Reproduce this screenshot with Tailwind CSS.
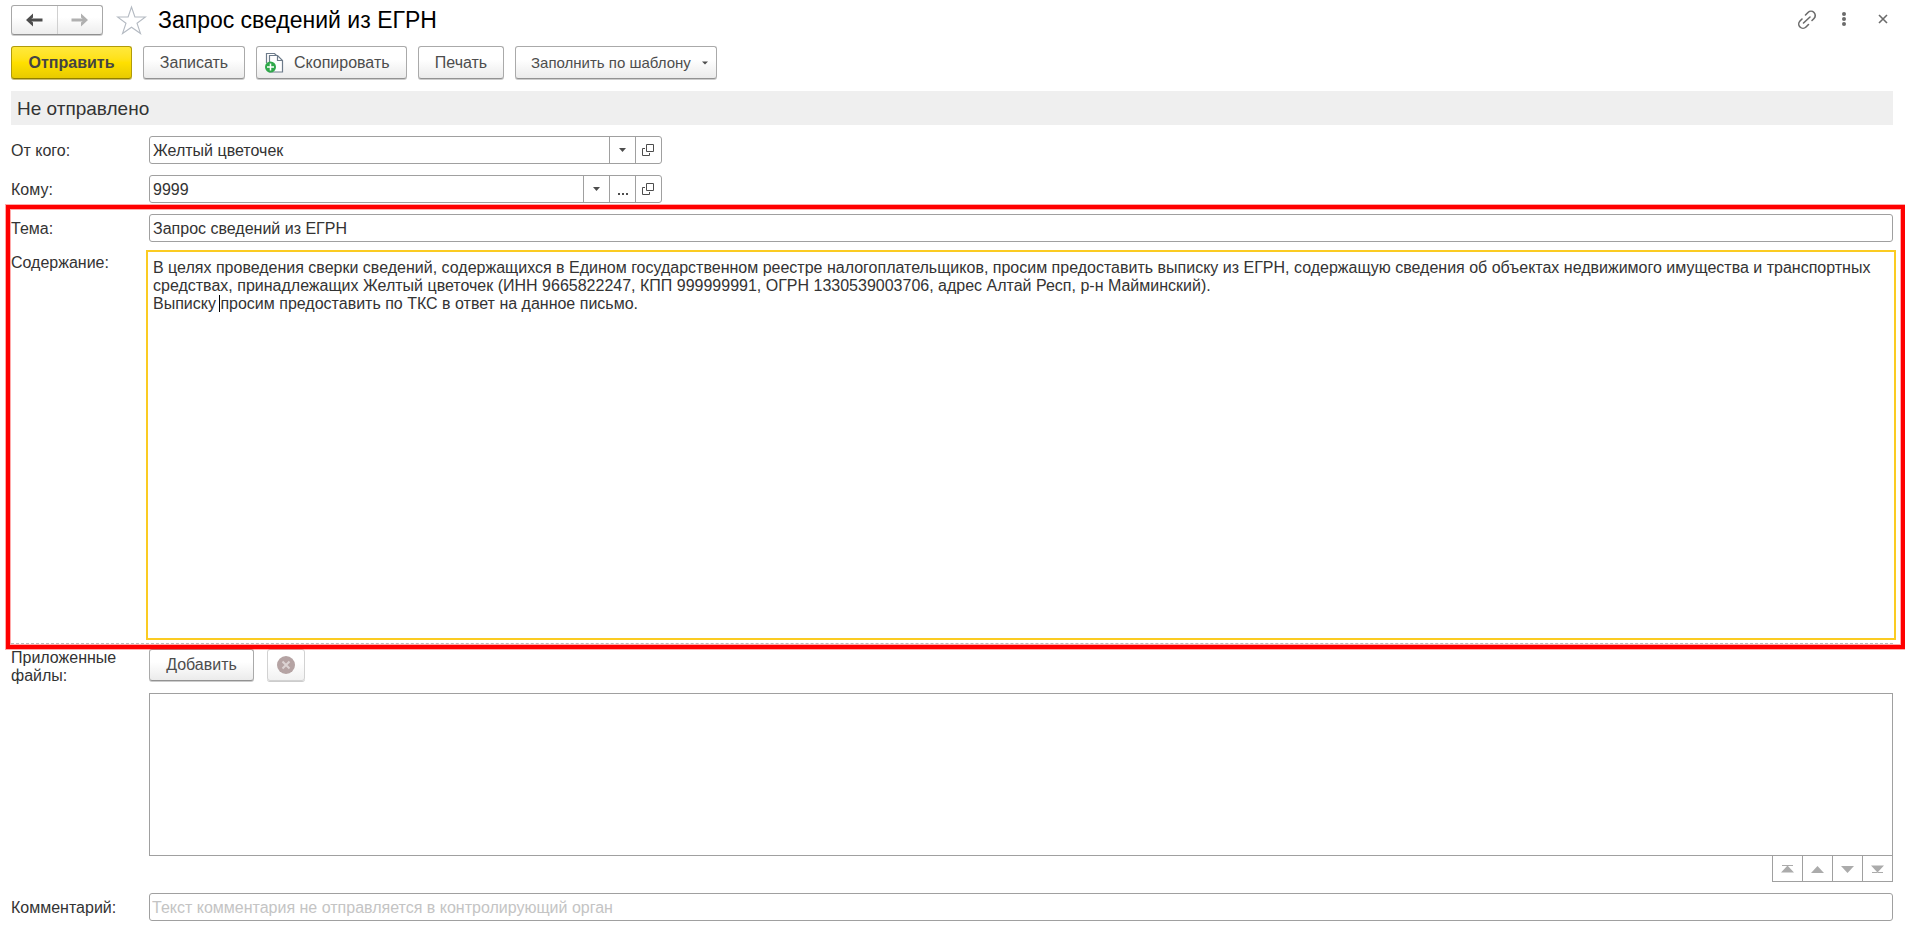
<!DOCTYPE html>
<html lang="ru">
<head>
<meta charset="utf-8">
<meta name="viewport" content="width=device-width, initial-scale=1">
<title>Запрос сведений из ЕГРН</title>
<script src="https://cdn.jsdelivr.net/npm/@tailwindcss/browser@4"></script>
</head>
<body class="flex min-h-screen flex-col bg-white pt-[5px] pr-3 pb-[11px] pl-[11px] font-['Liberation_Sans',Arial,sans-serif] text-[16px] leading-[18px] text-[#333]">

<header class="flex h-[30px] items-center">
  <nav class="flex h-[30px] w-[92px] rounded-[3px] border border-[#a8a8a8] border-b-[#8f8f8f] bg-linear-to-b from-white from-40% to-[#ededed] shadow-[0_1px_0_#ccc]" aria-label="История">
    <button type="button" aria-label="Назад" class="flex flex-1 items-center justify-center border-r border-[#d0d0d0]">
      <svg width="18" height="14" viewBox="0 0 18 14" fill="none" stroke="#4d4d4d" stroke-width="3"><path d="M17.500 7H4"/><path d="M8 0.500L1 7l7 6.500V9.500L5 7l3-2.500z" fill="#4d4d4d" stroke="none"/></svg>
    </button>
    <button type="button" aria-label="Вперед" class="flex flex-1 items-center justify-center">
      <svg width="18" height="14" viewBox="0 0 18 14" fill="none" stroke="#b0b0b0" stroke-width="3"><path d="M0.500 7H14"/><path d="M10 0.500L17 7l-7 6.500V9.500L13 7l-3-2.500z" fill="#b0b0b0" stroke="none"/></svg>
    </button>
  </nav>
  <button type="button" aria-label="В избранное" class="ml-[13px]">
    <svg width="31" height="30" viewBox="0 0 31 30" fill="none" stroke="#b4bac2" stroke-width="1.100"><path d="M15.500 2l3.400 10H29.500l-8.500 6.300L24.500 28.500 15.500 22.200 6.500 28.500 10 18.300 1.500 12H12.100z"/></svg>
  </button>
  <h1 class="ml-[11px] text-[23px] leading-[28px] text-black">Запрос сведений из ЕГРН</h1>
  <div class="ml-auto flex items-center">
    <button type="button" aria-label="Получить ссылку">
      <svg width="20" height="20" viewBox="0 0 20 20" fill="none" stroke="#6b6b6b" stroke-width="1.600" stroke-linecap="round"><path d="M6.500 13l6.500-6"/><path d="M8.500 5L11 2.500a4.200 4.200 0 0 1 6 6L15 10.500"/><path d="M11.500 14.500L9 17A4.200 4.200 0 0 1 3 11L5 9"/></svg>
    </button>
    <button type="button" aria-label="Еще" class="ml-[22px]">
      <svg width="10" height="20" viewBox="0 0 10 20" fill="#6b6b6b"><circle cx="5" cy="4" r="2"/><circle cx="5" cy="9" r="2"/><circle cx="5" cy="14" r="2"/></svg>
    </button>
    <button type="button" aria-label="Закрыть" class="mr-[5px] ml-[29px]">
      <svg width="10" height="20" viewBox="0 0 10 20" stroke="#6b6b6b" stroke-width="1.600"><path d="M1 5l8 8M9 5l-8 8"/></svg>
    </button>
  </div>
</header>

<div class="mt-[11px] flex gap-[11px] text-[#4d4d4d]">
  <button type="button" class="h-[33px] w-[121px] rounded-[3px] border border-[#b19b0a] border-b-[#917e00] bg-linear-to-b from-[#ffe83a] via-[#ffe000] to-[#e8cb00] font-bold text-[#444] shadow-[0_1px_0_#c9bd78]">Отправить</button>
  <button type="button" class="h-[33px] w-[102px] rounded-[3px] border border-[#aaa] border-b-[#929292] bg-linear-to-b from-white from-40% to-[#ebebeb] shadow-[0_1px_0_#ccc]">Записать</button>
  <button type="button" class="flex h-[33px] w-[151px] items-center rounded-[3px] border border-[#aaa] border-b-[#929292] bg-linear-to-b from-white from-40% to-[#ebebeb] pl-[8px] shadow-[0_1px_0_#ccc]">
    <svg width="19" height="21" viewBox="0 0 19 21" fill="none"><path d="M1.500 11V1.500H9.500l2 2" stroke="#6d7b8a" stroke-width="1.200"/><path d="M4.500 3.500h8l5 5V20H4.500z" fill="#fff" stroke="#6d7b8a" stroke-width="1.200"/><path d="M12.500 3.500v5h5" stroke="#6d7b8a" stroke-width="1.200"/><circle cx="5.500" cy="15" r="5.500" fill="#2fa84a"/><path d="M5.500 11.500v7M2 15h7" stroke="#fff" stroke-width="1.500"/></svg>
    <span class="ml-[10px]">Скопировать</span>
  </button>
  <button type="button" class="h-[33px] w-[86px] rounded-[3px] border border-[#aaa] border-b-[#929292] bg-linear-to-b from-white from-40% to-[#ebebeb] shadow-[0_1px_0_#ccc]">Печать</button>
  <button type="button" class="flex h-[33px] w-[202px] items-center justify-between rounded-[3px] border border-[#aaa] border-b-[#929292] bg-linear-to-b from-white from-40% to-[#ebebeb] pr-[8px] pl-[15px] text-[15px] whitespace-nowrap shadow-[0_1px_0_#ccc]">Заполнить по шаблону
    <svg class="shrink-0" width="6" height="4" viewBox="0 0 6 4" fill="#4d4d4d"><path d="M0 0.500h6L3 3.500z"/></svg>
  </button>
</div>

<p class="mt-3 flex h-[34px] items-center bg-[#efefef] px-[6px] pt-[2px] text-[19px] leading-[22px]">Не отправлено</p>

<main class="flex flex-1 flex-col">
  <div class="mt-[11px] flex items-center">
    <label for="from" class="w-[138px] shrink-0 pt-[2px]">От кого:</label>
    <div class="flex h-[28px] w-[513px] divide-x divide-[#a0a0a0] rounded-[3px] border border-[#a0a0a0]">
      <input id="from" type="text" value="Желтый цветочек" class="min-w-0 flex-1 px-[3px] pt-[2px] outline-none">
      <button type="button" aria-label="Выбрать отправителя" class="flex w-[26px] items-center justify-center">
        <svg width="7" height="4" viewBox="0 0 7 4" fill="#4d4d4d"><path d="M0 0h7L3.500 4z"/></svg>
      </button>
      <button type="button" aria-label="Открыть отправителя" class="flex w-[25px] items-center justify-center pr-px">
        <svg width="12" height="12" viewBox="0 0 12 12" fill="none" stroke="#4d4d4d"><path d="M4.500 0.500h7v7h-7z"/><path d="M3 4.500H0.500v7h7V9"/></svg>
      </button>
    </div>
  </div>

  <div class="mt-[11px] flex items-center">
    <label for="to" class="w-[138px] shrink-0 pt-[2px]">Кому:</label>
    <div class="flex h-[28px] w-[513px] divide-x divide-[#a0a0a0] rounded-[3px] border border-[#a0a0a0]">
      <input id="to" type="text" value="9999" class="min-w-0 flex-1 px-[3px] pt-[2px] outline-none">
      <button type="button" aria-label="Список получателей" class="flex w-[26px] items-center justify-center">
        <svg width="7" height="4" viewBox="0 0 7 4" fill="#4d4d4d"><path d="M0 0h7L3.500 4z"/></svg>
      </button>
      <button type="button" aria-label="Выбрать получателя" class="flex w-[26px] items-center justify-center">
        <svg width="10" height="12" viewBox="0 0 10 12" fill="#4d4d4d"><path d="M0 10h2v2H0zM4 10h2v2H4zM8 10h2v2H8z"/></svg>
      </button>
      <button type="button" aria-label="Открыть получателя" class="flex w-[25px] items-center justify-center pr-px">
        <svg width="12" height="12" viewBox="0 0 12 12" fill="none" stroke="#4d4d4d"><path d="M4.500 0.500h7v7h-7z"/><path d="M3 4.500H0.500v7h7V9"/></svg>
      </button>
    </div>
  </div>

  <section class="relative mt-[2px] flex flex-1 flex-col pt-[9px] pb-[3px]">
    <div class="flex items-center">
      <label for="subject" class="w-[138px] shrink-0 pt-[2px]">Тема:</label>
      <input id="subject" type="text" value="Запрос сведений из ЕГРН" class="h-[28px] min-w-0 flex-1 rounded-[3px] border border-[#a0a0a0] px-[3px] pt-[2px] outline-none">
    </div>
    <div class="mt-2 flex flex-1">
      <label for="body" class="w-[135px] shrink-0 pt-1">Содержание:</label>
      <div class="relative -mr-[3px] flex flex-1">
        <textarea id="body" class="min-h-[200px] flex-1 resize-none border-2 border-[#fbcb22] px-[5px] pt-[7px] outline-none">В целях проведения сверки сведений, содержащихся в Едином государственном реестре налогоплательщиков, просим предоставить выписку из ЕГРН, содержащую сведения об объектах недвижимого имущества и транспортных средствах, принадлежащих Желтый цветочек (ИНН 9665822247, КПП 999999991, ОГРН 1330539003706, адрес Алтай Респ, р-н Майминский).
Выписку просим предоставить по ТКС в ответ на данное письмо.</textarea>
        <span class="absolute top-[45px] left-[73px] h-[17px] w-px bg-black"></span>
      </div>
    </div>
    <div class="mt-[3px] border-t border-dashed border-[#bbb]"></div>
    <div class="pointer-events-none absolute top-0 -right-[12px] -bottom-[2px] -left-[5px] border-4 border-[#f00] shadow-[0_0_0_1px_#ff000055,inset_0_0_0_1px_#ff000055]"></div>
  </section>

  <div class="mt-[2px] flex">
    <span id="files-label" class="w-[138px] shrink-0">Приложенные<br>файлы:</span>
    <div class="flex gap-[13px] text-[#4d4d4d]">
      <button type="button" class="h-[32px] w-[105px] rounded-[3px] border border-[#aaa] border-b-[#929292] bg-linear-to-b from-white from-40% to-[#ebebeb] shadow-[0_1px_0_#ccc]">Добавить</button>
      <button type="button" disabled aria-label="Удалить файл" class="flex h-[32px] w-[38px] items-center justify-center rounded-[3px] border border-[#d2d2d2] bg-linear-to-b from-white from-40% to-[#f1f1f1] shadow-[0_1px_0_#ccc]">
        <svg width="18" height="18" viewBox="0 0 18 18"><circle cx="9" cy="9" r="9" fill="#b5a3a3"/><path d="M5.500 5.500l7 7M12.500 5.500l-7 7" stroke="#dcd3d3" stroke-width="2"/></svg>
      </button>
    </div>
  </div>

  <div class="mt-2 ml-[138px] flex flex-col items-end">
    <div role="listbox" aria-labelledby="files-label" class="h-[163px] w-full border border-[#a0a0a0]"></div>
    <div class="flex h-[26px] divide-x divide-[#a0a0a0] border border-t-0 border-[#a0a0a0]">
      <button type="button" aria-label="В начало" class="flex w-[30px] items-center justify-center"><svg width="13" height="8" viewBox="0 0 13 8" fill="#ababab"><path d="M1 0h11v1H1zM6.500 0.500L13 7.500H0z"/></svg></button>
      <button type="button" aria-label="Вверх" class="flex w-[30px] items-center justify-center"><svg width="13" height="8" viewBox="0 0 13 8" fill="#ababab"><path d="M6.500 1L13 8H0z"/></svg></button>
      <button type="button" aria-label="Вниз" class="flex w-[30px] items-center justify-center"><svg width="13" height="8" viewBox="0 0 13 8" fill="#ababab"><path d="M6.500 8L13 1H0z"/></svg></button>
      <button type="button" aria-label="В конец" class="flex w-[29px] items-center justify-center"><svg width="13" height="8" viewBox="0 0 13 8" fill="#ababab"><path d="M6.500 7.500L13 0.500H0zM1 7h11v1H1z"/></svg></button>
    </div>
  </div>

  <div class="mt-[11px] flex items-center">
    <label for="comment" class="w-[138px] shrink-0 pt-[2px]">Комментарий:</label>
    <input id="comment" type="text" placeholder="Текст комментария не отправляется в контролирующий орган" class="h-[28px] min-w-0 flex-1 rounded-[3px] border border-[#a0a0a0] px-[2px] pt-[2px] outline-none placeholder:text-[#c4c4c4]">
  </div>
</main>
</body>
</html>
